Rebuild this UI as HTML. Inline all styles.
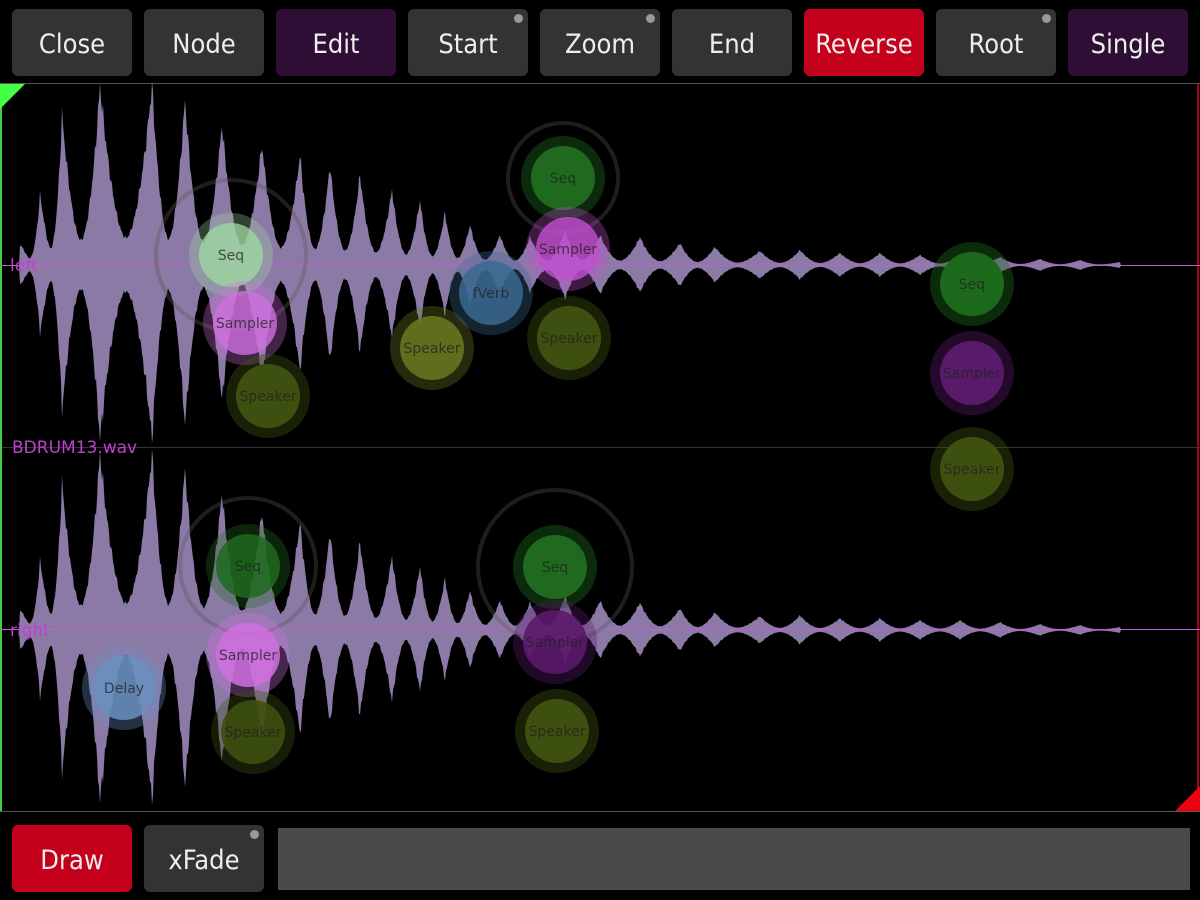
<!DOCTYPE html>
<html><head><meta charset="utf-8"><style>
body{margin:0;width:1200px;height:900px;background:#000;overflow:hidden;font-family:"DejaVu Sans Condensed","DejaVu Sans","Liberation Sans",sans-serif;position:relative}
.b{position:absolute;width:120px;height:67px;border-radius:6px;background:#333;color:#eee;font-size:27px;display:flex;align-items:center;justify-content:center;padding-top:4px;box-sizing:border-box}
.b.p{background:#2f0e36}.b.r{background:#c4001a}
.b .d{position:absolute;right:5px;top:5px;width:9px;height:9px;border-radius:50%;background:#999}
svg{position:absolute;left:0;top:0}
</style></head><body>
<div class="b" style="left:12px;top:9px">Close</div>
<div class="b" style="left:144px;top:9px">Node</div>
<div class="b p" style="left:276px;top:9px">Edit</div>
<div class="b" style="left:408px;top:9px">Start<span class="d"></span></div>
<div class="b" style="left:540px;top:9px">Zoom<span class="d"></span></div>
<div class="b" style="left:672px;top:9px">End</div>
<div class="b r" style="left:804px;top:9px">Reverse</div>
<div class="b" style="left:936px;top:9px">Root<span class="d"></span></div>
<div class="b p" style="left:1068px;top:9px">Single</div>
<div class="b r" style="left:12px;top:825px;height:67px">Draw</div>
<div class="b" style="left:144px;top:825px;height:67px">xFade<span class="d"></span></div>
<div style="position:absolute;left:278px;top:828px;width:912px;height:62px;background:#4a4a4a"></div>
<svg width="1200" height="900" id="s">
<line x1="0" y1="83.5" x2="1200" y2="83.5" stroke="#555"/>
<line x1="0" y1="811.5" x2="1200" y2="811.5" stroke="#555"/>
<line x1="0" y1="447.5" x2="1200" y2="447.5" stroke="#333"/>
<rect x="0" y="84" width="2" height="727" fill="#4c4"/>
<rect x="1197" y="84" width="2" height="727" fill="#a02"/>
<path d="M0 84H25L0 109Z" fill="#4f4"/>
<path d="M1200 811H1175L1200 786Z" fill="#e01"/>
<g id="w" fill="#8c7aa6"></g>
<line x1="0" y1="265.5" x2="1200" y2="265.5" stroke="#c060d0"/>
<line x1="0" y1="629.5" x2="1200" y2="629.5" stroke="#c060d0"/>
<g font-size="17" fill="#c040d0" font-family="DejaVu Sans"><text x="10" y="271">left</text><text x="12" y="453">BDRUM13.wav</text><text x="10" y="636">right</text></g>
<g id="n" font-size="14" text-anchor="middle" font-family="DejaVu Sans"></g>
</svg>
<script>
var pk=[[20,20],[40,70],[62,150],[100,180],[152,180],[185,165],[222,140],[262,120],[300,110],[330,100],[360,90],[392,75],[420,65],[445,52],[470,40],[500,30],[530,28],[565,35],[600,30],[640,28],[680,22],[715,18],[760,14],[800,15],[840,12],[880,12],[920,10],[960,10],[1000,8],[1040,6],[1080,5],[1120,3]];
function amp(x){for(var i=0;i<pk.length-1;i++){var a=pk[i],b=pk[i+1];if(x>=a[0]&&x<=b[0]){var t=(x-a[0])/(b[0]-a[0]);var A=a[1]+(b[1]-a[1])*t;var u=Math.abs(2*t-1);var sh=0.15+0.85*Math.pow(u,1.8);var n=1+0.08*Math.sin(x*2.7)*Math.sin(x*1.3);return A*sh*n;}}return 0;}
var g=document.getElementById('w'),h='';
[265,630].forEach(function(c,k){var top='',bot='';for(var x=2;x<=1122;x++){var a=amp(x)*(k?0.98:1);top+=(x==2?'M':'L')+x+' '+(c-a).toFixed(1);bot=' L'+x+' '+(c+a*0.97).toFixed(1)+bot;}h+='<path d="'+top+bot+'Z"/>';});
g.innerHTML=h;
var N=[[231,255,'Seq','#9fd9a0',0.75,75],[245,323,'Sampler','#d070e0',0.8,0],[268,396,'Speaker','#3d5010',1,0],[432,348,'Speaker','#6a7a20',0.85,0],[491,293,'fVerb','#3a6a90',0.85,0],[563,178,'Seq','#1f6a1f',1,55],[568,249,'Sampler','#c050d0',0.8,0],[569,338,'Speaker','#3d5010',1,0],[972,284,'Seq','#1d6a1d',1,0],[972,373,'Sampler','#5a1a6a',1,0],[972,469,'Speaker','#3d5010',1,0],[248,566,'Seq','#1f6a1f',0.85,68],[248,655,'Sampler','#d070e0',0.85,0],[253,732,'Speaker','#3d5010',0.9,0],[124,688,'Delay','#6a90c0',0.85,0],[555,567,'Seq','#1f6a1f',1,77],[555,642,'Sampler','#5a1a6a',0.9,0],[557,731,'Speaker','#3d5010',1,0]];
var s='';N.forEach(function(n){if(n[5])s+='<circle cx="'+n[0]+'" cy="'+n[1]+'" r="'+n[5]+'" fill="none" stroke="#555" stroke-opacity=".35" stroke-width="4"/>';s+='<circle cx="'+n[0]+'" cy="'+n[1]+'" r="42" fill="'+n[3]+'" opacity="'+(n[4]*0.4)+'"/><circle cx="'+n[0]+'" cy="'+n[1]+'" r="32" fill="'+n[3]+'" opacity="'+n[4]+'"/><text x="'+n[0]+'" y="'+(n[1]+5)+'" fill="#222" fill-opacity=".75">'+n[2]+'</text>';});
document.getElementById('n').innerHTML=s;
</script>
</body></html>
